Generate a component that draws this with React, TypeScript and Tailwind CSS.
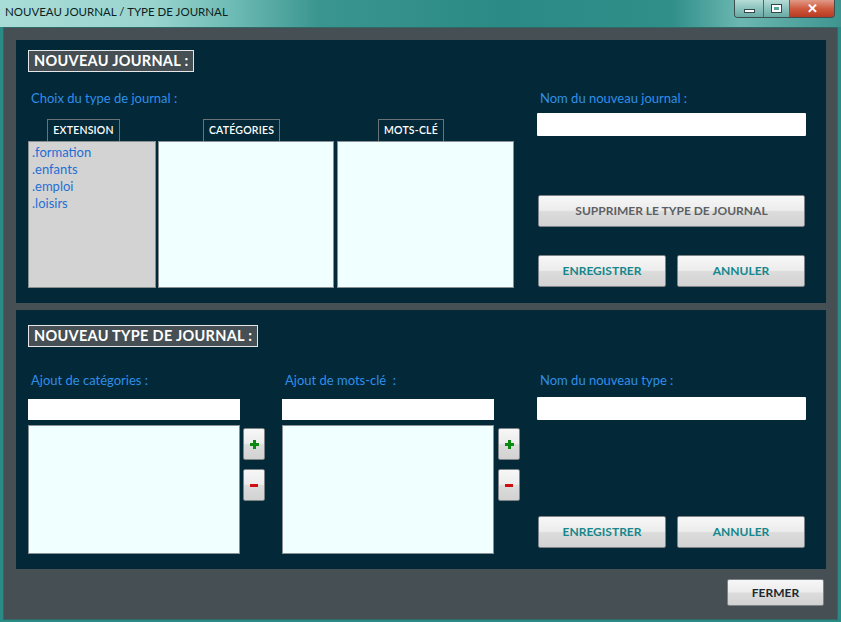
import React from "react";

const font = { fontFamily: "Lato, 'Open Sans', sans-serif" };

const Btn = ({ label, w, gray }: { label: string; w: string; gray?: boolean }) => (
  <button
    className={`${w} h-[32px] rounded-[2px] border border-[#7d8386] bg-[linear-gradient(180deg,#f7f7f7_0%,#ececec_48%,#dcdcdc_52%,#d2d2d2_100%)] text-[12px] font-bold ${
      gray ? "text-[#5c6063]" : "text-[#16878c]"
    }`}
  >
    {label}
  </button>
);

const SmallBtn = ({ kind }: { kind: "+" | "-" }) => (
  <button className="w-[22px] h-[32px] rounded-[2px] border border-[#7d8386] bg-[linear-gradient(180deg,#f7f7f7_0%,#ececec_48%,#dcdcdc_52%,#d2d2d2_100%)] flex items-center justify-center">
    {kind === "+" ? (
      <span className="relative block w-[9px] h-[9px]">
        <span className="absolute left-0 top-[3px] w-[9px] h-[3px] bg-[#0a8a10]" />
        <span className="absolute left-[3px] top-0 w-[3px] h-[9px] bg-[#0a8a10]" />
      </span>
    ) : (
      <span className="block w-[8px] h-[3px] bg-[#d01010]" />
    )}
  </button>
);

const Header = ({ text }: { text: string }) => (
  <div className="self-start h-[22px] px-[5px] flex items-center border border-[#e6e6e6] bg-[#454f54] text-white text-[14.5px] font-bold tracking-[0.3px]">
    {text}
  </div>
);

const Label = ({ text }: { text: string }) => (
  <div className="text-[13px] text-[#2f8fe8] leading-[14px] whitespace-pre">{text}</div>
);

const Tab = ({ text, w, ml }: { text: string; w: string; ml: string }) => (
  <div
    className={`${w} ${ml} h-[22px] border border-b-0 border-[#6c7378] flex items-center justify-center text-white text-[10.5px] font-semibold tracking-[0.2px]`}
  >
    {text}
  </div>
);

export default function App() {
  return (
    <div style={font} className="w-[841px] h-[622px] flex flex-col bg-[#2a8a85] overflow-hidden">
      {/* title bar */}
      <div className="h-[27px] flex items-start bg-[linear-gradient(90deg,#a9dcd7_0%,#9ad4cf_18%,#6cbab4_28%,#3a958f_38%,#2b8a85_60%,#318f8a_80%,#6cb7b1_88%,#3e9590_100%)]">
        <div className="pl-[5px] pt-[5px] text-[11.5px] text-[#0c1f1f] leading-[14px]">
          NOUVEAU JOURNAL / TYPE DE JOURNAL
        </div>
        <div className="ml-auto mr-[6px] flex h-[18px] border border-t-0 border-[#3c4e4e] rounded-b-[4px] overflow-hidden">
          <div className="w-[29px] flex items-center justify-center bg-[linear-gradient(180deg,#b7dcd8_0%,#8cc2bd_50%,#6aaaa4_100%)] border-r border-[#44706c]">
            <span className="block w-[11px] h-[4px] bg-white border border-[#304848] mt-[4px]" />
          </div>
          <div className="w-[26px] flex items-center justify-center bg-[linear-gradient(180deg,#b7dcd8_0%,#8cc2bd_50%,#6aaaa4_100%)] border-r border-[#44706c]">
            <span className="block w-[11px] h-[9px] bg-white border border-[#304848] p-[2px]">
              <span className="block w-full h-full bg-[#5aa49e]" />
            </span>
          </div>
          <div className="w-[44px] flex items-center justify-center bg-[linear-gradient(180deg,#e09a88_0%,#cf5a3f_50%,#b83a20_100%)] text-white text-[13px] font-bold leading-none">
            ✕
          </div>
        </div>
      </div>

      {/* body */}
      <div className="flex-1 mx-[3px] mb-[2px] bg-[#454f54] flex flex-col border border-[#2f6a67]">
        {/* top panel */}
        <div className="ml-[12px] mt-[12px] w-[810px] h-[263px] bg-[#032838] flex">
          <div className="pl-[12px] pt-[10px] w-[521px] flex flex-col">
            <Header text="NOUVEAU JOURNAL :" />
            <div className="mt-[19px] pl-[3px]">
              <Label text="Choix du type de journal :" />
            </div>
            <div className="mt-[14px] flex">
              <Tab text="EXTENSION" w="w-[73px]" ml="ml-[19px]" />
              <Tab text="CATÉGORIES" w="w-[77px]" ml="ml-[83px]" />
              <Tab text="MOTS-CLÉ" w="w-[66px]" ml="ml-[98px]" />
            </div>
            <div className="flex">
              <div className="w-[128px] h-[147px] bg-[#d3d3d3] border border-[#8a8f92] pl-[3px] pt-[2px] text-[13px] leading-[17px] text-[#1f6fd3]">
                <div>.formation</div>
                <div>.enfants</div>
                <div>.emploi</div>
                <div>.loisirs</div>
              </div>
              <div className="ml-[2px] w-[176px] h-[147px] bg-[#f0ffff] border border-[#8a8f92]" />
              <div className="ml-[3px] w-[177px] h-[147px] bg-[#f0ffff] border border-[#8a8f92]" />
            </div>
          </div>
          <div className="w-[269px] flex flex-col pt-[51px]">
            <div className="pl-[3px]">
              <Label text="Nom du nouveau journal :" />
            </div>
            <div className="mt-[8px] h-[23px] w-[269px] bg-white rounded-[1px]" />
            <div className="mt-[59px] ml-[1px]">
              <Btn label="SUPPRIMER LE TYPE DE JOURNAL" w="w-[267px]" gray />
            </div>
            <div className="mt-[28px] ml-[1px] flex gap-[11px]">
              <Btn label="ENREGISTRER" w="w-[128px]" />
              <Btn label="ANNULER" w="w-[128px]" />
            </div>
          </div>
        </div>

        {/* bottom panel */}
        <div className="ml-[12px] mt-[7px] w-[810px] h-[259px] bg-[#032838] flex">
          <div className="pl-[12px] pt-[15px] w-[266px] flex flex-col">
            <Header text="NOUVEAU TYPE DE JOURNAL :" />
            <div className="mt-[26px] pl-[3px]">
              <Label text="Ajout de catégories :" />
            </div>
            <div className="mt-[12px] flex">
              <div className="flex flex-col">
                <div className="w-[212px] h-[21px] bg-white" />
                <div className="mt-[5px] w-[212px] h-[129px] bg-[#f0ffff] border border-[#8a8f92]" />
              </div>
              <div className="ml-[3px] mt-[29px] flex flex-col gap-[9px]">
                <SmallBtn kind="+" />
                <SmallBtn kind="-" />
              </div>
            </div>
          </div>
          <div className="w-[255px] pt-[15px] flex flex-col">
            <div className="h-[22px]" />
            <div className="mt-[26px] pl-[3px]">
              <Label text="Ajout de mots-clé  :" />
            </div>
            <div className="mt-[12px] flex">
              <div className="flex flex-col">
                <div className="w-[212px] h-[21px] bg-white" />
                <div className="mt-[5px] w-[212px] h-[129px] bg-[#f0ffff] border border-[#8a8f92]" />
              </div>
              <div className="ml-[4px] mt-[29px] flex flex-col gap-[9px]">
                <SmallBtn kind="+" />
                <SmallBtn kind="-" />
              </div>
            </div>
          </div>
          <div className="w-[269px] flex flex-col pt-[63px]">
            <div className="pl-[3px]">
              <Label text="Nom du nouveau type :" />
            </div>
            <div className="mt-[10px] h-[23px] w-[269px] bg-white rounded-[1px]" />
            <div className="mt-[96px] ml-[1px] flex gap-[11px]">
              <Btn label="ENREGISTRER" w="w-[128px]" />
              <Btn label="ANNULER" w="w-[128px]" />
            </div>
          </div>
        </div>

        {/* footer */}
        <div className="mt-[10px] flex justify-end pr-[13px]">
          <button className="w-[97px] h-[27px] rounded-[2px] border border-[#7d8386] bg-[linear-gradient(180deg,#f7f7f7_0%,#ececec_48%,#dcdcdc_52%,#d2d2d2_100%)] text-[12px] font-bold text-[#1d2a30]">
            FERMER
          </button>
        </div>
      </div>
    </div>
  );
}
